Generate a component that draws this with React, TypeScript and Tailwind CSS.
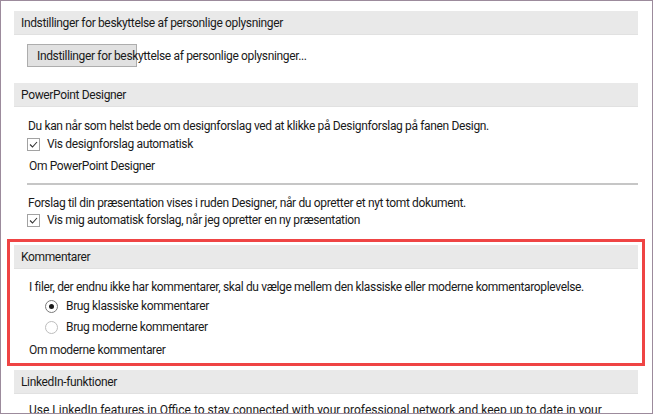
import React from "react";

const font = { fontFamily: 'Roboto, "Liberation Sans", Arial, sans-serif' };

const SectionHeader = ({ title }: { title: string }) => (
  <div className="h-[24px] flex items-center pl-[7px] bg-[#e9e9e9] border-b border-[#e1e1e1] text-[12px] text-[#1a1a1a]">
    {title}
  </div>
);

const Checkbox = ({ label }: { label: string }) => (
  <div className="h-[16px] flex items-center pl-[13px]">
    <span className="w-[13px] h-[13px] border border-[#a2a2a2] bg-white flex items-center justify-center">
      <svg width="9" height="7" viewBox="0 0 9 7" fill="none">
        <path d="M1 3.5 L3.5 6 L8 1" stroke="#333" strokeWidth="1.1" />
      </svg>
    </span>
    <span className="ml-[7px]">{label}</span>
  </div>
);

const Radio = ({ label, checked }: { label: string; checked?: boolean }) => (
  <div className="h-[16px] flex items-center pl-[31px]">
    <span
      className={`w-[13px] h-[13px] rounded-full border bg-white flex items-center justify-center ${
        checked ? "border-[#7a7a7a]" : "border-[#bdbdbd]"
      }`}
    >
      {checked && <span className="w-[5px] h-[5px] rounded-full bg-[#1a1a1a]" />}
    </span>
    <span className="ml-[8px]">{label}</span>
  </div>
);

export default function App() {
  return (
    <div
      className="w-[653px] h-[414px] overflow-hidden bg-white border border-[#9c8b9c] pt-[10px] pl-[13px] pr-[14px] text-[12px] leading-[16px] tracking-[-0.35px] text-[#1a1a1a]"
      style={font}
    >
      <SectionHeader title="Indstillinger for beskyttelse af personlige oplysninger" />
      <div className="mt-[9px] pl-[13px]">
        <div className="w-[110px] h-[23px] bg-[#e1e1e1] border border-[#adadad] flex items-center pl-[9px] whitespace-nowrap">
          Indstillinger for beskyttelse af personlige oplysninger...
        </div>
      </div>

      <div className="mt-[16px]">
        <SectionHeader title="PowerPoint Designer" />
      </div>
      <div className="mt-[11px] pl-[14px]">
        Du kan når som helst bede om designforslag ved at klikke på Designforslag på fanen Design.
      </div>
      <div className="mt-[2px]">
        <Checkbox label="Vis designforslag automatisk" />
      </div>
      <div className="mt-[6px] pl-[15px]">Om PowerPoint Designer</div>
      <div className="mt-[9px] ml-[13px] h-[2px] bg-[#c6c6c6]" />
      <div className="mt-[10px] pl-[14px]">
        Forslag til din præsentation vises i ruden Designer, når du opretter et nyt tomt dokument.
      </div>
      <div className="mt-[1px]">
        <Checkbox label="Vis mig automatisk forslag, når jeg opretter en ny præsentation" />
      </div>

      <div className="mt-[11px] -ml-[7px] -mr-[7px] border-[3px] border-[#ef4444] px-[4px] pt-[3px] pb-[5px]">
        <SectionHeader title="Kommentarer" />
        <div className="mt-[10px] pl-[15px]">
          I filer, der endnu ikke har kommentarer, skal du vælge mellem den klassiske eller moderne kommentaroplevelse.
        </div>
        <div className="mt-[3px]">
          <Radio label="Brug klassiske kommentarer" checked />
        </div>
        <div className="mt-[5px]">
          <Radio label="Brug moderne kommentarer" />
        </div>
        <div className="mt-[7px] pl-[15px]">Om moderne kommentarer</div>
      </div>

      <div className="mt-[4px]">
        <SectionHeader title="LinkedIn-funktioner" />
      </div>
      <div className="mt-[8px] pl-[15px] whitespace-nowrap tracking-normal">
        Use LinkedIn features in Office to stay connected with your professional network and keep up to date in your
      </div>
    </div>
  );
}
